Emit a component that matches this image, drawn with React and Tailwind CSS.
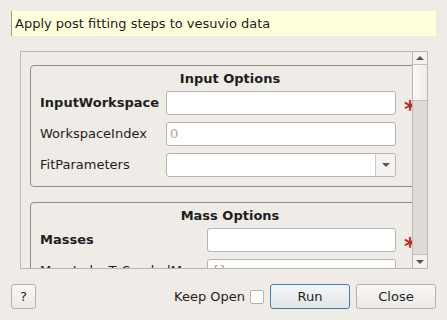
import React from "react";

const font = { fontFamily: '"DejaVu Sans", "Liberation Sans", sans-serif' };

function Field({ placeholder, combo }) {
  return (
    <div className="h-[24px] flex-1 rounded-[3px] border border-[#b8b4af] bg-white flex items-center">
      <div className="flex-1 px-[3px] text-[13px] text-[#a8a5a2]">{placeholder}</div>
      {combo && (
        <div className="w-[20px] h-full border-l border-[#cfcbc7] bg-[#f4f3f2] rounded-r-[3px] flex items-center justify-center">
          <div className="w-0 h-0 border-l-[4px] border-r-[4px] border-t-[4px] border-l-transparent border-r-transparent border-t-[#555]" />
        </div>
      )}
    </div>
  );
}

function Star() {
  return (
    <div className="w-[16px] h-[24px] flex items-center justify-end overflow-visible">
      <span className="text-[#b3302a] text-[23px] font-bold leading-none translate-y-[6px] translate-x-[4px]">*</span>
    </div>
  );
}

export default function App() {
  return (
    <div className="w-[447px] h-[320px] bg-[#efebe7] flex flex-col overflow-hidden text-[#1e1e1e]" style={font}>
      <div className="mt-[11px] mx-[11px] h-[25px] bg-[#ffffdc] border-l border-[#a09d99] flex items-center px-[3px] text-[13px]">
        Apply post fitting steps to vesuvio data
      </div>
      <div className="mt-[15px] ml-[20px] w-[408px] h-[218px] border border-[#bab6b1] flex overflow-hidden">
        <div className="flex-1 overflow-hidden pl-[9px] pt-[13px]">
          <div className="w-[400px] flex flex-col gap-[15px]">
            <div className="h-[122px] rounded-[4px] border border-[#8f8c88] flex flex-col">
              <div className="h-[24px] flex items-center justify-center pt-[1px] text-[13px] font-bold">Input Options</div>
              <div className="flex flex-col gap-[7px] pl-[9px] pt-[1px]">
                <div className="flex items-center">
                  <div className="w-[126px] text-[13px] font-bold">InputWorkspace</div>
                  <div className="w-[230px] flex"><Field /></div>
                  <Star />
                </div>
                <div className="flex items-center">
                  <div className="w-[126px] text-[13px]">WorkspaceIndex</div>
                  <div className="w-[230px] flex"><Field placeholder="0" /></div>
                </div>
                <div className="flex items-center">
                  <div className="w-[126px] text-[13px]">FitParameters</div>
                  <div className="w-[230px] flex"><Field combo /></div>
                </div>
              </div>
            </div>
            <div className="h-[122px] rounded-[4px] border border-[#8f8c88] flex flex-col">
              <div className="h-[24px] flex items-center justify-center pt-[1px] text-[13px] font-bold">Mass Options</div>
              <div className="flex flex-col gap-[7px] pl-[9px] pt-[1px]">
                <div className="flex items-center">
                  <div className="w-[167px] text-[13px] font-bold">Masses</div>
                  <div className="w-[189px] flex"><Field /></div>
                  <Star />
                </div>
                <div className="flex items-center">
                  <div className="w-[167px] text-[13px] whitespace-nowrap overflow-hidden">MassIndexToSymbolMap</div>
                  <div className="w-[189px] flex"><Field placeholder="{}" /></div>
                </div>
              </div>
            </div>
          </div>
        </div>
        <div className="w-[15px] border-l border-[#bab6b1] flex flex-col bg-[#dfdcd8]">
          <div className="h-[13px] bg-[#f3f1ef] border-b border-[#c5c1bc] flex items-center justify-center">
            <div className="w-0 h-0 border-l-[4px] border-r-[4px] border-b-[4px] border-l-transparent border-r-transparent border-b-[#555]" />
          </div>
          <div className="h-[36px] bg-gradient-to-r from-[#fbfbfa] to-[#eeecea] border-b border-[#c5c1bc]" />
          <div className="flex-1" />
          <div className="h-[14px] bg-[#f3f1ef] border-t border-[#c5c1bc] flex items-center justify-center">
            <div className="w-0 h-0 border-l-[4px] border-r-[4px] border-t-[4px] border-l-transparent border-r-transparent border-t-[#555]" />
          </div>
        </div>
      </div>
      <div className="mt-[15px] flex items-center px-[11px] h-[25px]">
        <div className="w-[25px] h-[25px] rounded-[3px] border border-[#b5b1ac] bg-gradient-to-b from-[#f9f8f7] to-[#ece9e6] flex items-center justify-center text-[13px]">?</div>
        <div className="flex-1" />
        <div className="text-[13px] mr-[5px]">Keep Open</div>
        <div className="w-[14px] h-[14px] border border-[#b5b1ac] bg-white rounded-[2px] mr-[6px]" />
        <div className="w-[80px] h-[25px] rounded-[3px] border border-[#3c7fb1] bg-gradient-to-b from-[#f3f5f7] to-[#e3e6e9] flex items-center justify-center text-[13px] mr-[6px]">Run</div>
        <div className="w-[80px] h-[25px] rounded-[3px] border border-[#b5b1ac] bg-gradient-to-b from-[#f9f8f7] to-[#ece9e6] flex items-center justify-center text-[13px]">Close</div>
      </div>
    </div>
  );
}
